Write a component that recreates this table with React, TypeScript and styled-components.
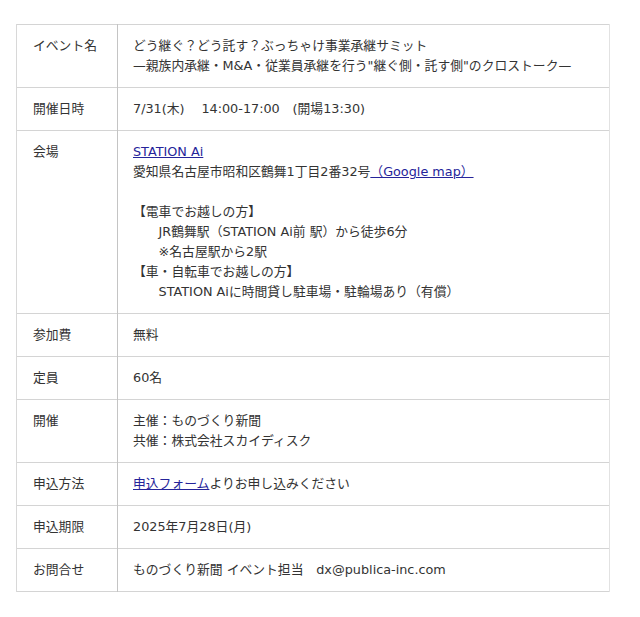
import styled, { createGlobalStyle } from "styled-components";

const GlobalStyle = createGlobalStyle`
  body {
    margin: 0;
    background: #fff;
    font-family: "DejaVu Sans", "Noto Sans CJK JP", sans-serif;
    color: #333;
  }
`;

const Page = styled.div`
  padding: 24px 16px;
`;

const Table = styled.table`
  width: 594px;
  border-collapse: collapse;
  font-size: 12.8px;
  line-height: 20px;
`;

const Row = styled.tr<{ $tall?: boolean }>`
  border-top: 1px solid #d4d4d4;
  border-bottom: 1px solid #d4d4d4;

  & > * {
    padding-bottom: ${(p) => (p.$tall ? "12px" : "11px")};
  }
`;

const Label = styled.th`
  width: 84px;
  padding: 11px 0 11px 16px;
  text-align: left;
  font-weight: normal;
  vertical-align: top;
  border-left: 1px solid #d8d8d8;
  border-right: 1px solid #c4c4c4;
  white-space: nowrap;
`;

const Value = styled.td`
  padding: 11px 16px 11px 15px;
  vertical-align: top;
  border-right: 1px solid #e2e2e2;
  white-space: pre-wrap;
`;

const Link = styled.a`
  color: #25249a;
  text-decoration: underline;
`;

type Item = { label: string; value: React.ReactNode; tall?: boolean };

const items: Item[] = [
  {
    label: "イベント名",
    value:
      "どう継ぐ？どう託す？ぶっちゃけ事業承継サミット\n—親族内承継・M&A・従業員承継を行う\"継ぐ側・託す側\"のクロストーク—",
  },
  { label: "開催日時", value: "7/31(木)　 14:00-17:00　(開場13:30)" },
  {
    label: "会場",
    value: (
      <>
        <Link href="#">STATION Ai</Link>
        {"\n愛知県名古屋市昭和区鶴舞1丁目2番32号"}
        <Link href="#">（Google map）</Link>
        {
          "\n\n【電車でお越しの方】\n　　JR鶴舞駅（STATION Ai前 駅）から徒歩6分\n　　※名古屋駅から2駅\n【車・自転車でお越しの方】\n　　STATION Aiに時間貸し駐車場・駐輪場あり（有償）"
        }
      </>
    ),
  },
  { label: "参加費", value: "無料" },
  { label: "定員", value: "60名" },
  { label: "開催", value: "主催：ものづくり新聞\n共催：株式会社スカイディスク", tall: true },
  {
    label: "申込方法",
    value: (
      <>
        <Link href="#">申込フォーム</Link>よりお申し込みください
      </>
    ),
  },
  { label: "申込期限", value: "2025年7月28日(月)" },
  { label: "お問合せ", value: "ものづくり新聞 イベント担当　dx@publica-inc.com" },
];

export default function App() {
  return (
    <>
      <GlobalStyle />
      <Page>
        <Table>
          <tbody>
            {items.map((item) => (
              <Row key={item.label} $tall={item.tall}>
                <Label>{item.label}</Label>
                <Value>{item.value}</Value>
              </Row>
            ))}
          </tbody>
        </Table>
      </Page>
    </>
  );
}
